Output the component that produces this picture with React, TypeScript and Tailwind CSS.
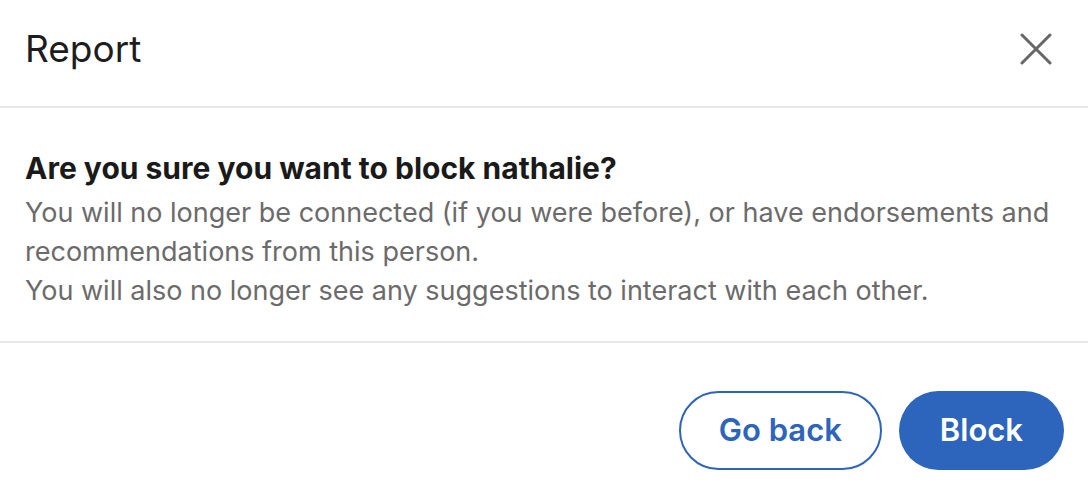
export default function App() {
    return (
        <div className="flex h-[504px] w-[1088px] flex-col bg-white font-['Inter','Liberation_Sans',sans-serif]">
            <div className="flex h-[108px] items-center justify-between border-b-2 border-[#e8e8e8] pb-[8px] pl-[25px] pr-[36px]">
                <h2 className="text-[37px] font-normal leading-[44px] text-[#1d1d1d]">
                    Report
                </h2>
                <button aria-label="Dismiss" className="text-[#666666]">
                    <svg
                        width="32"
                        height="32"
                        viewBox="0 0 32 32"
                        fill="none"
                        stroke="currentColor"
                        strokeWidth="3"
                        strokeLinecap="round"
                    >
                        <path d="M2 2L30 30M30 2L2 30" />
                    </svg>
                </button>
            </div>

            <div className="flex h-[235px] flex-col justify-center border-b-2 border-[#e8e8e8] px-[25px] pt-[10px]">
                <h3 className="mb-[7px] text-[30px] font-bold leading-[36px] text-[#1a1a1a]">
                    Are you sure you want to block nathalie?
                </h3>
                <p className="text-[27px] leading-[39px] text-[#6b6b6b]">
                    You will no longer be connected (if you were before), or
                    have endorsements and recommendations from this person.
                </p>
                <p className="text-[27px] leading-[39px] text-[#6b6b6b]">
                    You will also no longer see any suggestions to interact with
                    each other.
                </p>
            </div>

            <div className="flex flex-1 items-center justify-end gap-[17px] px-[24px] pt-[14px]">
                <button className="h-[79px] rounded-full border-2 border-[#2d64bc] px-[38px] text-[31px] font-semibold text-[#2d64bc]">
                    Go back
                </button>
                <button className="h-[79px] rounded-full bg-[#2d64bc] px-[41px] text-[31px] font-semibold text-white">
                    Block
                </button>
            </div>
        </div>
    );
}
